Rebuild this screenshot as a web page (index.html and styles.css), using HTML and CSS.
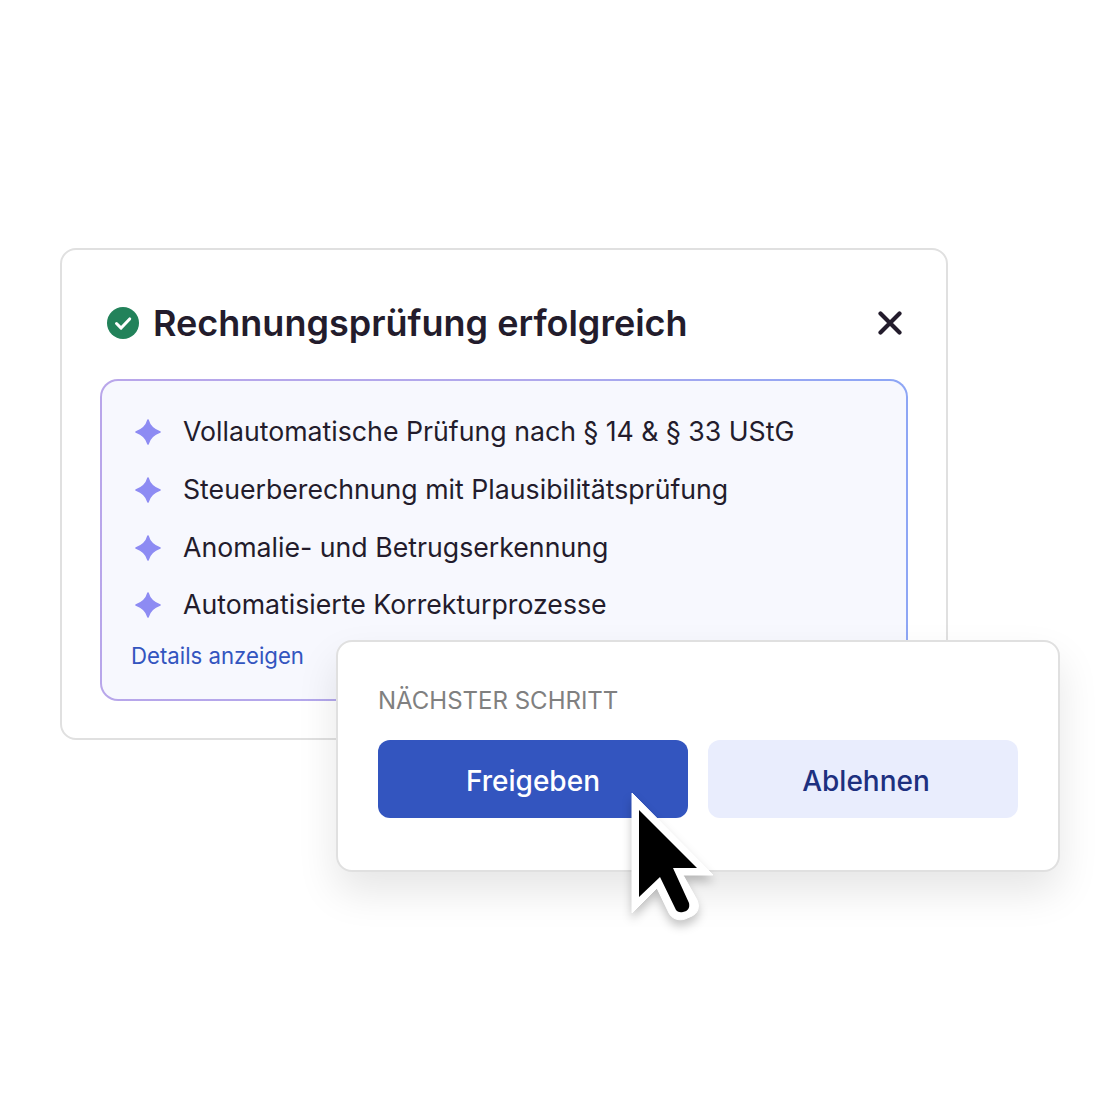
FILE: index.html

```html
<!DOCTYPE html>
<html lang="de">
<head>
    <meta charset="UTF-8">
    <meta name="viewport" content="width=device-width, initial-scale=1.0">
    <title>Rechnungsprüfung</title>
    <link rel="stylesheet" href="styles.css">
</head>
<body>
    <div class="scene">
        <div class="card">
            <div class="card-header">
                <svg class="check-icon" viewBox="0 0 32 32">
                    <circle cx="16" cy="16" r="16" fill="#22825a"/>
                    <path d="M9.500 16.500l4.600 4.600 8.600-9.200" fill="none" stroke="#fff" stroke-width="3" stroke-linecap="round" stroke-linejoin="round"/>
                </svg>
                <h1>Rechnungsprüfung erfolgreich</h1>
                <svg class="close-icon" viewBox="0 0 24 24">
                    <path d="M2.500 2.500l19 19M21.500 2.500l-19 19" fill="none" stroke="#231c2c" stroke-width="4.200" stroke-linecap="round"/>
                </svg>
            </div>
            <div class="checks">
                <ul class="check-list">
                    <li>
                        <svg class="spark" viewBox="0 0 26 26"><path d="M13 1c1.600 6 5 9.600 12 12-7 2.400-10.400 6-12 12-1.600-6-5-9.600-12-12 7-2.400 10.400-6 12-12z"/></svg>
                        Vollautomatische Prüfung nach § 14 &amp; § 33 UStG
                    </li>
                    <li>
                        <svg class="spark" viewBox="0 0 26 26"><path d="M13 1c1.600 6 5 9.600 12 12-7 2.400-10.400 6-12 12-1.600-6-5-9.600-12-12 7-2.400 10.400-6 12-12z"/></svg>
                        Steuerberechnung mit Plausibilitätsprüfung
                    </li>
                    <li>
                        <svg class="spark" viewBox="0 0 26 26"><path d="M13 1c1.600 6 5 9.600 12 12-7 2.400-10.400 6-12 12-1.600-6-5-9.600-12-12 7-2.400 10.400-6 12-12z"/></svg>
                        Anomalie- und Betrugserkennung
                    </li>
                    <li>
                        <svg class="spark" viewBox="0 0 26 26"><path d="M13 1c1.600 6 5 9.600 12 12-7 2.400-10.400 6-12 12-1.600-6-5-9.600-12-12 7-2.400 10.400-6 12-12z"/></svg>
                        Automatisierte Korrekturprozesse
                    </li>
                </ul>
                <a class="details-link" href="#">Details anzeigen</a>
            </div>
        </div>

        <div class="next-step">
            <div class="next-label">NÄCHSTER SCHRITT</div>
            <div class="next-buttons">
                <button class="btn btn-primary">Freigeben</button>
                <button class="btn btn-secondary">Ablehnen</button>
            </div>
        </div>

        <svg class="cursor" viewBox="0 0 90 135">
            <path d="M5 4L86 86H56L70 111C73 118 71 124 65 127L58 130C52 132 45 130 42 124L30 99L5 124Z" fill="#fff" stroke="#fff" stroke-width="1" stroke-linejoin="round"/>
            <path d="M12 21L70 79H46L62 114C63 119 61 122 56 123C52 124 50 122 49 121L33 88L12 108Z" fill="#000"/>
        </svg>
    </div>
</body>
</html>
```

FILE: styles.css

```css
:root {
    --ink: #231c2c;
    --blue: #3355bf;
    --border: #e0e0e0;
}
* {
    box-sizing: border-box;
}
body {
    margin: 0;
    background-color: white;
    font-family: Inter, 'Liberation Sans', sans-serif;
    color: var(--ink);
}
.scene {
    position: relative;
    width: 1120px;
    height: 1120px;
    padding: 248px 0 0 60px;
}
.card {
    width: 888px;
    height: 492px;
    padding: 39px 38px 38px;
    background-color: white;
    border: 2px solid var(--border);
    border-radius: 16px;
}
.card-header {
    display: flex;
    align-items: center;
    height: 68px;
    padding: 0 4px 0 7px;
    margin-bottom: 22px;
}
.check-icon {
    width: 32px;
    height: 32px;
    margin-right: 14px;
}
h1 {
    flex: 1;
    margin: 0;
    font-size: 36px;
    font-weight: 600;
    line-height: 68px;
}
.close-icon {
    width: 24px;
    height: 24px;
    margin-right: 2px;
}
.checks {
    height: 322px;
    padding: 21.6px 29px;
    background: linear-gradient(#f7f8fe, #f7f8fe) padding-box,
        linear-gradient(100deg, #b9a6ea, #b0a8ec 50%, #8ea6f5 90%) border-box;
    border: 2px solid transparent;
    border-radius: 18px;
}
.check-list {
    margin: 0;
    padding: 0;
    list-style: none;
}
.check-list li {
    display: flex;
    align-items: center;
    height: 57.6px;
    padding-left: 4px;
    font-size: 26.7px;
}
.spark {
    width: 26px;
    height: 26px;
    margin: 2px 22px 0 0;
    fill: #8d8bf3;
    stroke: #8d8bf3;
    stroke-width: 1.6;
    stroke-linejoin: round;
}
.details-link {
    display: block;
    margin-top: 9px;
    font-size: 22.2px;
    color: var(--blue);
    text-decoration: none;
}
.next-step {
    position: absolute;
    left: 336px;
    top: 640px;
    width: 724px;
    height: 232px;
    padding: 44px 40px 0;
    background-color: white;
    border: 2px solid var(--border);
    border-radius: 16px;
    box-shadow: 0 20px 40px rgba(0, 0, 0, 0.1);
}
.next-label {
    font-size: 24px;
    line-height: 30px;
    color: #808080;
    margin-bottom: 24px;
}
.next-buttons {
    display: flex;
    gap: 20px;
}
.btn {
    width: 310px;
    height: 78px;
    padding-top: 4px;
    border: none;
    border-radius: 12px;
    font-family: inherit;
    font-size: 28px;
    font-weight: 500;
}
.btn-primary {
    background-color: var(--blue);
    color: white;
}
.btn-secondary {
    padding-left: 12px;
    background-color: #e9edfd;
    color: #1d307f;
}
.cursor {
    position: absolute;
    left: 627px;
    top: 789px;
    width: 90px;
    height: 135px;
    filter: drop-shadow(0 6px 5px rgba(0, 0, 0, 0.22));
}
```
